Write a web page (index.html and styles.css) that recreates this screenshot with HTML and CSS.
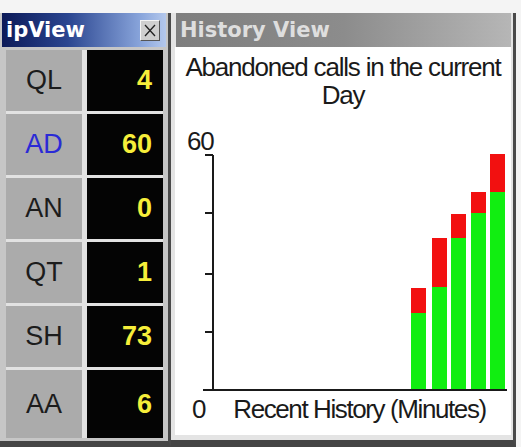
FILE: index.html
```html
<!DOCTYPE html>
<html lang="en">
<head>
    <meta charset="UTF-8">
    <title>ipView - History View</title>
    <link rel="stylesheet" href="styles.css">
</head>
<body>
    <div class="desk">
        <section class="ipview">
            <header class="ip-title">
                <span>ipView</span>
                <span class="close">
                    <svg width="12" height="13" viewBox="0 0 12 13"><path d="M1 1 L11 12 M11 1 L1 12" stroke="#222" stroke-width="1.3" fill="none"/></svg>
                </span>
            </header>
            <div class="stats">
                <div class="cell label">QL</div><div class="cell value">4</div>
                <div class="cell label active">AD</div><div class="cell value">60</div>
                <div class="cell label">AN</div><div class="cell value">0</div>
                <div class="cell label">QT</div><div class="cell value">1</div>
                <div class="cell label">SH</div><div class="cell value">73</div>
                <div class="cell label">AA</div><div class="cell value">6</div>
            </div>
        </section>

        <section class="history">
            <header class="hv-title">History View</header>
            <div class="hv-body">
                <p class="chart-title">Abandoned calls in the current<br>Day</p>
                <div class="y-max">60</div>
                <svg class="plot" width="336" height="238" viewBox="0 0 336 238">
                    <!-- bars: red = abandoned part, green = rest -->
                    <rect x="236" y="159" width="15" height="77" fill="#11ee11"/>
                    <rect x="236" y="134" width="15" height="25" fill="#f21010"/>
                    <rect x="257" y="133" width="15" height="103" fill="#11ee11"/>
                    <rect x="257" y="84" width="15" height="49" fill="#f21010"/>
                    <rect x="276" y="84" width="15" height="152" fill="#11ee11"/>
                    <rect x="276" y="60" width="15" height="24" fill="#f21010"/>
                    <rect x="296" y="59" width="15" height="177" fill="#11ee11"/>
                    <rect x="296" y="38" width="15" height="21" fill="#f21010"/>
                    <rect x="315" y="38" width="15" height="198" fill="#11ee11"/>
                    <rect x="315" y="0" width="15" height="38" fill="#f21010"/>
                    <!-- axis -->
                    <path d="M38 1 V236 M30 1 H38 M30 59 H38 M30 120 H38 M30 178 H38 M28 236 H332" stroke="#1a1a1a" stroke-width="2" fill="none"/>
                </svg>
                <div class="x-axis">
                    <span class="x-zero">0</span>
                    <span class="x-label">Recent History (Minutes)</span>
                </div>
            </div>
        </section>
    </div>
</body>
</html>
```

FILE: styles.css
```css
* {
    box-sizing: border-box;
    margin: 0;
    padding: 0;
}

body {
    font-family: 'Liberation Sans', Arial, sans-serif;
    background: #f4f4f4;
    color: #1a1a1a;
}

.desk {
    display: flex;
    align-items: stretch;
    padding-top: 13px;
    height: 447px;
    width: 521px;
    overflow: hidden;
}

/* left panel */
.ipview {
    width: 171px;
    background: #c6c6c6;
    border-right: 3px solid #4a4a4a;
    border-bottom: 6px solid #454545;
    padding: 0 5px 3px 6px;
    display: flex;
    flex-direction: column;
}

.ip-title {
    height: 34px;
    margin: 0 -3px 3px -4px;
    padding: 0 6px 0 4px;
    display: flex;
    align-items: center;
    justify-content: space-between;
    background: linear-gradient(to right, #0c1a58 0%, #2a4590 40%, #8aa6dc 85%, #b4c8ec 100%);
    color: #fff;
    font-family: 'DejaVu Sans', sans-serif;
    font-weight: bold;
    font-size: 21px;
}

.close {
    width: 20px;
    height: 21px;
    display: flex;
    align-items: center;
    justify-content: center;
    background: #cfcfcf;
    border: 1px solid;
    border-color: #f4f4f4 #555 #555 #f4f4f4;
}

.stats {
    flex: 1;
    display: grid;
    grid-template-columns: 76px 76px;
    grid-template-rows: repeat(5, 61px) 1fr;
    gap: 3px 5px;
    background: #e2e2e2;
}

.cell {
    display: flex;
    align-items: center;
    font-size: 27px;
}

.label {
    justify-content: center;
    background: #ababab;
    color: #1c1c1c;
}

.label.active {
    color: #2a2ad6;
}

.value {
    justify-content: flex-end;
    padding-right: 11px;
    background: #040404;
    color: #f6ee3a;
    font-weight: bold;
}

/* right panel */
.history {
    width: 345px;
    background: #e4e4e4;
    border-right: 3px solid #4a4a4a;
    border-bottom: 7px solid #454545;
    padding: 0 2px 5px 4px;
    display: flex;
    flex-direction: column;
}

.hv-title {
    height: 34px;
    margin-left: 1px;
    padding-left: 4px;
    display: flex;
    align-items: center;
    background: linear-gradient(to right, #7e7e7e 0%, #8c8c8c 50%, #b6b6b6 100%);
    color: #dedede;
    font-family: 'DejaVu Sans', sans-serif;
    font-weight: bold;
    font-size: 21px;
}

.hv-body {
    flex: 1;
    background: #fff;
    padding-top: 6px;
    font-size: 26px;
    letter-spacing: -1.2px;
    line-height: 28px;
}

.chart-title {
    text-align: center;
}

.y-max {
    margin-top: 19px;
    padding-left: 12px;
    line-height: 26px;
}

.plot {
    display: block;
}

.x-axis {
    display: flex;
    margin-top: 3px;
}

.x-zero {
    padding-left: 17px;
}

.x-label {
    margin-left: 28px;
    letter-spacing: -1.4px;
}
```
